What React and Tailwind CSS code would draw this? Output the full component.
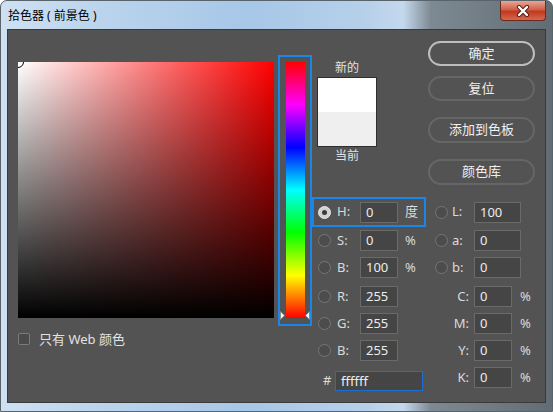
import React from 'react';

// ────────────────────────────────────────────────────────────
// Small pieces
// ────────────────────────────────────────────────────────────

const Radio = ({ checked }) =>
  checked ? (
    <span className="flex h-[13px] w-[13px] shrink-0 items-center justify-center rounded-full border border-[#e6e6e6] bg-[#d2d2d2]">
      <span className="h-[5px] w-[5px] rounded-full bg-[#3a3a3a]" />
    </span>
  ) : (
    <span className="block h-[13px] w-[13px] shrink-0 rounded-full border border-[#767676] bg-[#4c4c4c]" />
  );

const Field = ({ value, width }) => (
  <div
    className={`h-[21px] ${width} shrink-0 border border-[#6a6a6a] bg-[#454545] pl-[5px] text-[13px] leading-[19px] text-[#ececec]`}
  >
    {value}
  </div>
);

const Btn = ({ children, primary, className }) => (
  <div
    className={`flex w-[107px] items-center justify-center rounded-full border-2 text-[13px] text-[#efefef] ${
      primary ? 'border-[#bdbdbd]' : 'border-[#666666]'
    } ${className}`}
  >
    {children}
  </div>
);

// left block of a row (radio, label, field, unit)
const LeftPart = ({ label, value, unit, checked, boxed }) => (
  <div
    className={`flex h-full w-[114px] shrink-0 items-center border-2 ${
      boxed ? 'border-[#1a86e8]' : 'border-transparent'
    }`}
  >
    <span className="ml-[4px] flex">
      <Radio checked={checked} />
    </span>
    <span className="ml-[6px] w-[23px] text-[13px] text-[#dadada]">{label}:</span>
    <Field value={value} width="w-[38px]" />
    <span className="ml-[7px] text-[13px] text-[#dadada]">{unit}</span>
  </div>
);

const LabPart = ({ label, value }) => (
  <div className="flex items-center">
    <div className="flex w-[48px] items-center pl-[9px]">
      <Radio />
      <span className="ml-[4px] text-[13px] text-[#dadada]">{label}:</span>
    </div>
    <Field value={value} width="w-[47px]" />
  </div>
);

const CmykPart = ({ label, value }) => (
  <div className="flex items-center">
    <span className="w-[43px] text-right text-[13px] text-[#dadada]">{label}:</span>
    <span className="ml-[5px] flex">
      <Field value={value} width="w-[38px]" />
    </span>
    <span className="ml-[8px] text-[13px] text-[#dadada]">%</span>
  </div>
);

// ────────────────────────────────────────────────────────────
// Window
// ────────────────────────────────────────────────────────────

export default function App() {
  return (
    <div className="flex h-[412px] w-[553px] flex-col overflow-hidden rounded-t-[7px] border border-[#59636c] bg-[linear-gradient(to_right,#cfe0f2_0%,#b9d3ec_20%,#a7c7e7_45%,#b6d0ea_66%,#c4d8ed_73%,#7e8a93_78%,#616c74_100%)] font-['Noto_Sans','Noto_Sans_CJK_SC',sans-serif]">
      {/* Title bar */}
      <div className="flex h-[28px] shrink-0 items-start justify-between">
        <span className="pl-[7px] pt-[7px] text-[12px] leading-[16px] text-black">拾色器 ( 前景色 )</span>
        <div className="mr-[6px] flex h-[20px] w-[46px] items-center justify-center rounded-b-[4px] border border-t-0 border-[#6b2a1e] bg-[linear-gradient(to_bottom,#e9a593_0%,#d0614a_45%,#c2391f_55%,#d6674d_100%)]">
          <svg width="16" height="12" viewBox="0 0 16 12">
            <path d="M4 2 L12 10 M12 2 L4 10" stroke="#4a1d14" strokeWidth="4.2" strokeLinecap="round" />
            <path d="M4 2 L12 10 M12 2 L4 10" stroke="#ffffff" strokeWidth="2.4" strokeLinecap="round" />
          </svg>
        </div>
      </div>

      {/* Content */}
      <div className="mx-[6px] mb-[8px] flex flex-1 items-start border border-[#3a3a3a] bg-[#535353]">
        {/* Colour field + web checkbox */}
        <div className="ml-[10px] mt-[32px] flex flex-col">
          <div className="relative h-[256px] w-[256px] overflow-hidden bg-[linear-gradient(to_top,#000,transparent),linear-gradient(to_right,#fff,#f00)]">
            <span className="absolute -left-[6px] -top-[6px] h-[12px] w-[12px] rounded-full border-[1.5px] border-black" />
          </div>
          <div className="mt-[14px] flex items-center">
            <span className="h-[12px] w-[12px] rounded-[2px] border border-[#7a7a7a] bg-[#4a4a4a]" />
            <span className="ml-[9px] text-[13px] leading-[14px] text-[#e2e2e2]">只有 Web 颜色</span>
          </div>
        </div>

        {/* Hue slider */}
        <div className="relative ml-[4px] mt-[25px] h-[271px] w-[34px] border-2 border-[#1a86e8] pl-[6px] pt-[5px]">
          <div className="h-[256px] w-[19px] bg-[linear-gradient(to_bottom,#f00,#f0f,#00f,#0ff,#0f0,#ff0,#f00)]" />
          <svg className="absolute bottom-[4px] left-0" width="5" height="9" viewBox="0 0 5 9">
            <path d="M0.5 0.5 L4.5 4.5 L0.5 8.5 Z" fill="#f2f2f2" stroke="#8a8a8a" strokeWidth="0.8" />
          </svg>
          <svg className="absolute bottom-[4px] right-0" width="5" height="9" viewBox="0 0 5 9">
            <path d="M4.5 0.5 L0.5 4.5 L4.5 8.5 Z" fill="#f2f2f2" stroke="#8a8a8a" strokeWidth="0.8" />
          </svg>
        </div>

        {/* Right side */}
        <div className="flex flex-col">
          <div className="flex h-[167px]">
            {/* swatch */}
            <div className="ml-[5px] flex w-[60px] flex-col items-center pt-[30px]">
              <span className="text-[12px] leading-[16px] text-[#e2e2e2]">新的</span>
              <div className="mt-[1px] flex h-[70px] w-[60px] flex-col border border-[#2e2e2e]">
                <div className="flex-1 bg-white" />
                <div className="flex-1 bg-[#efefef]" />
              </div>
              <span className="mt-[1px] text-[12px] leading-[16px] text-[#e2e2e2]">当前</span>
            </div>
            {/* buttons */}
            <div className="ml-[51px] flex flex-col pt-[11px]">
              <Btn primary className="h-[25px]">确定</Btn>
              <Btn className="mt-[10px] h-[25px]">复位</Btn>
              <Btn className="mt-[16px] h-[26px]">添加到色板</Btn>
              <Btn className="mt-[16px] h-[26px]">颜色库</Btn>
            </div>
          </div>

          {/* value rows */}
          <div className="flex h-[30px] items-center">
            <LeftPart label="H" value="0" unit="度" checked boxed />
            <LabPart label="L" value="100" />
          </div>
          <div className="flex h-[27px] items-center">
            <LeftPart label="S" value="0" unit="%" />
            <LabPart label="a" value="0" />
          </div>
          <div className="flex h-[27px] items-center">
            <LeftPart label="B" value="100" unit="%" />
            <LabPart label="b" value="0" />
          </div>
          <div className="mt-[2px] flex h-[27px] items-center">
            <LeftPart label="R" value="255" unit="" />
            <CmykPart label="C" value="0" />
          </div>
          <div className="flex h-[27px] items-center">
            <LeftPart label="G" value="255" unit="" />
            <CmykPart label="M" value="0" />
          </div>
          <div className="flex h-[27px] items-center">
            <LeftPart label="B" value="255" unit="" />
            <CmykPart label="Y" value="0" />
          </div>
          <div className="flex h-[27px] items-center">
            <div className="mt-[7px] flex w-[114px] shrink-0 items-center pl-[11px]">
              <span className="w-[12px] text-[13px] text-[#dadada]">#</span>
              <div className="h-[20px] w-[88px] border border-[#1a6fd0] bg-[#454545] pl-[5px] text-[13px] leading-[18px] text-[#ececec]">
                ffffff
              </div>
            </div>
            <CmykPart label="K" value="0" />
          </div>
        </div>
      </div>
    </div>
  );
}
